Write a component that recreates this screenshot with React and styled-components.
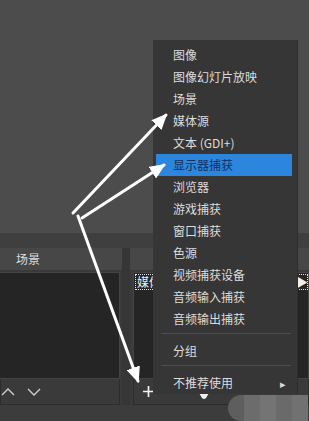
import React from "react";
import styled, { createGlobalStyle } from "styled-components";

const GlobalStyle = createGlobalStyle`
  html, body {
    margin: 0;
    padding: 0;
    background: #3c3c3c;
  }
  body {
    font-family: "Noto Sans CJK SC", "Noto Sans", sans-serif;
  }
`;

const menuItems = [
  "图像",
  "图像幻灯片放映",
  "场景",
  "媒体源",
  "文本 (GDI+)",
  "显示器捕获",
  "浏览器",
  "游戏捕获",
  "窗口捕获",
  "色源",
  "视频捕获设备",
  "音频输入捕获",
  "音频输出捕获",
];

const App = () => {
  return (
    <Screen>
      <GlobalStyle />
      <Preview />
      <Band />
      <DockRow>
        <Dock>
          <DockHeader>场景</DockHeader>
          <DockList />
          <Toolbar>
            <ToolIcon viewBox="0 0 14 10">
              <path d="M1 8 L7 2 L13 8" />
            </ToolIcon>
            <ToolIcon viewBox="0 0 14 10">
              <path d="M1 2 L7 8 L13 2" />
            </ToolIcon>
          </Toolbar>
        </Dock>
        <Splitter />
        <Dock $right>
          <DockHeader />
          <DockList $right>
            <FocusItem>媒体</FocusItem>
            <FocusItem $edge>▶</FocusItem>
          </DockList>
          <Toolbar $right>
            <PlusIcon viewBox="0 0 14 14">
              <path d="M7 1 V13 M1 7 H13" />
            </PlusIcon>
            <HiddenIcon viewBox="0 0 10 6">
              <path d="M0 0 H10 L7 5 Q5 7 3 5 Z" />
            </HiddenIcon>
          </Toolbar>
        </Dock>
      </DockRow>
      <StatusBar />

      <Menu>
        {menuItems.map((label) => (
          <MenuItem key={label} $active={label === "显示器捕获"}>
            {label}
          </MenuItem>
        ))}
        <Separator />
        <MenuItem>分组</MenuItem>
        <Separator />
        <MenuItem>
          不推荐使用
          <SubArrow>▸</SubArrow>
        </MenuItem>
      </Menu>

      <Mosaic>
        <Tile $c="#5e5e5e" />
        <Tile $c="#6c6c6c" />
        <Tile $c="#747474" />
        <Tile $c="#6a6a6a" />
        <Tile $c="#717171" />
      </Mosaic>

      <Arrows viewBox="0 0 309 421">
        <defs>
          <marker
            id="head"
            markerUnits="userSpaceOnUse"
            markerWidth="16"
            markerHeight="14"
            refX="14"
            refY="7"
            orient="auto"
          >
            <path d="M0 0 L16 7 L0 14 Z" fill="#fff" />
          </marker>
        </defs>
        <line x1="73" y1="213" x2="166" y2="115" markerEnd="url(#head)" />
        <line x1="82" y1="218" x2="164" y2="165" markerEnd="url(#head)" />
        <line x1="78" y1="216" x2="138" y2="381" markerEnd="url(#head)" />
      </Arrows>
    </Screen>
  );
};

const Screen = styled.div`
  position: relative;
  width: 309px;
  height: 421px;
  overflow: hidden;
  display: flex;
  flex-direction: column;
  background: #3c3c3c;
`;

const Preview = styled.div`
  height: 233px;
  background: #4c4c4c;
`;

const Band = styled.div`
  height: 15px;
  background: #3f3f3f;
`;

const DockRow = styled.div`
  display: grid;
  grid-template-columns: 122px 8px 1fr;
  height: 157px;
`;

const Dock = styled.div`
  display: flex;
  flex-direction: column;
  padding-left: ${(p) => (p.$right ? "3px" : "0")};
  background: #3a3a3a;
`;

const Splitter = styled.div`
  background: #363636;
`;

const DockHeader = styled.div`
  height: 22px;
  margin-bottom: 2px;
  margin-left: ${(p) => (p.children ? "0" : "-3px")};
  background: #474747;
  color: #dedede;
  font-size: 12px;
  line-height: 22px;
  padding-left: 16px;
`;

const DockList = styled.div`
  flex: 1;
  display: flex;
  justify-content: space-between;
  align-items: flex-start;
  background: #252525;
  border: 1px solid #444;
  border-left: ${(p) => (p.$right ? "1px solid #444" : "none")};
  margin-right: ${(p) => (p.$right ? "0" : "2px")};
  padding: 1px 0 0 1px;
`;

const FocusItem = styled.div`
  color: #f0f0f0;
  font-size: 12px;
  line-height: 14px;
  padding: 0 1px;
  border: 1px dotted #e6e6e6;
  width: ${(p) => (p.$edge ? "10px" : "16px")};
  overflow: hidden;
  white-space: nowrap;
`;

const Toolbar = styled.div`
  height: 25px;
  display: flex;
  align-items: center;
  gap: ${(p) => (p.$right ? "44px" : "12px")};
  padding-left: ${(p) => (p.$right ? "8px" : "0")};
  background: #3a3a3a;
  border: 1px solid #2c2c2c;
  border-top: none;
  margin-right: ${(p) => (p.$right ? "0" : "2px")};
`;

const ToolIcon = styled.svg`
  width: 14px;
  height: 10px;
  fill: none;
  stroke: #cfcfcf;
  stroke-width: 1.4;
`;

const PlusIcon = styled.svg`
  width: 13px;
  height: 13px;
  fill: none;
  stroke: #f2f2f2;
  stroke-width: 1.8;
`;

const HiddenIcon = styled.svg`
  width: 10px;
  height: 6px;
  margin-top: 8px;
  fill: #f0f0f0;
`;

const StatusBar = styled.div`
  flex: 1;
  background: #3c3c3c;
`;

const Menu = styled.div`
  position: absolute;
  left: 153px;
  top: 40px;
  width: 144px;
  padding: 4px 0 0;
  background: #363636;
  box-shadow: 1px 0 0 #2e2e2e;
  display: flex;
  flex-direction: column;
`;

const MenuItem = styled.div`
  position: relative;
  height: 22px;
  margin: 0 5px 0 3px;
  padding-left: 17px;
  font-size: 12px;
  line-height: 22px;
  white-space: nowrap;
  color: ${(p) => (p.$active ? "#14305a" : "#dcdcdc")};
  background: ${(p) => (p.$active ? "#2d86de" : "transparent")};
`;

const SubArrow = styled.span`
  position: absolute;
  right: 6px;
  top: 0;
  font-size: 11px;
  color: #d8d8d8;
`;

const Separator = styled.div`
  height: 1px;
  margin: 3px 6px 6px 8px;
  background: #4d4d4d;
`;

const Mosaic = styled.div`
  position: absolute;
  left: 228px;
  top: 395px;
  display: flex;
  height: 26px;
  border-radius: 13px 0 0 13px;
  overflow: hidden;
`;

const Tile = styled.div`
  width: 16px;
  height: 26px;
  background: ${(p) => p.$c};
`;

const Arrows = styled.svg`
  position: absolute;
  left: 0;
  top: 0;
  width: 309px;
  height: 421px;
  pointer-events: none;
  line {
    stroke: #ffffff;
    stroke-width: 3;
    stroke-linecap: round;
  }
`;

export default App;
